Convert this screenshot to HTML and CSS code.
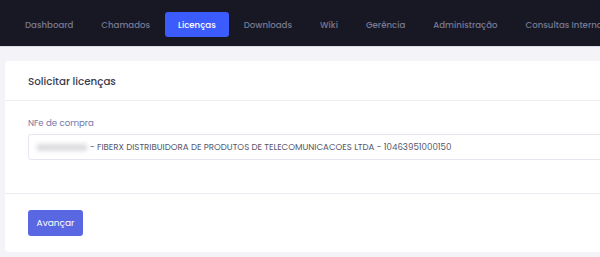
FILE: index.html
```html
<!DOCTYPE html>
<html lang="pt-BR">
<head>
    <meta charset="UTF-8">
    <meta name="viewport" content="width=device-width, initial-scale=1.0">
    <title>Solicitar licenças</title>
    <link rel="stylesheet" href="styles.css">
</head>
<body>

    <nav class="topnav">
        <a class="nav-item">Dashboard</a>
        <a class="nav-item">Chamados</a>
        <a class="nav-item active">Licenças</a>
        <a class="nav-item">Downloads</a>
        <a class="nav-item">Wiki</a>
        <a class="nav-item">Gerência</a>
        <a class="nav-item">Administração</a>
        <a class="nav-item">Consultas Internas</a>
    </nav>

    <main class="page">
        <div class="card">
            <div class="card-header">
                <h2>Solicitar licenças</h2>
            </div>
            <div class="card-body">
                <label class="field-label">NFe de compra</label>
                <div class="select-box">
                    <span class="masked"></span>
                    <span>- FIBERX DISTRIBUIDORA DE PRODUTOS DE TELECOMUNICACOES LTDA - 10463951000150</span>
                </div>
            </div>
            <div class="card-footer">
                <button class="btn-primary">Avançar</button>
            </div>
        </div>
    </main>

</body>
</html>
```

FILE: styles.css
```css
* {
    box-sizing: border-box;
}
body {
    margin: 0;
    font-family: "Poppins", "Inter", "Open Sans", sans-serif;
    background-color: #f4f4f8;
    overflow: hidden;
    width: 600px;
}
.topnav {
    display: flex;
    align-items: flex-start;
    gap: 2px;
    height: 47px;
    padding: 12px 0 0 12px;
    background: #181824;
    border-bottom: 1px solid #dcdce6;
    white-space: nowrap;
}
.nav-item {
    display: block;
    padding: 0 13px;
    height: 25px;
    line-height: 26px;
    font-size: 8.6px;
    font-weight: 500;
    color: #777a93;
    border-radius: 3px;
}
.nav-item.active {
    background: #3b5bfd;
    color: white;
}
.page {
    padding: 14px 0 0 5px;
}
.card {
    background: white;
    border-radius: 4px;
    width: 620px;
}
.card-header {
    height: 40px;
    display: flex;
    align-items: center;
    padding: 2px 23px 0;
    border-bottom: 1px solid #ececf2;
}
.card-header h2 {
    margin: 0;
    font-size: 10.3px;
    font-weight: 500;
    color: #3a3b50;
}
.card-body {
    padding: 16px 23px 33px;
    border-bottom: 1px solid #ececf2;
}
.field-label {
    display: block;
    font-size: 8.6px;
    line-height: 12px;
    color: #7476a6;
    margin-bottom: 5px;
}
.select-box {
    display: flex;
    align-items: center;
    height: 26px;
    padding: 0 8px;
    border: 1px solid #e6e6ee;
    border-radius: 3px;
    font-size: 8.65px;
    color: #55566a;
    white-space: nowrap;
}
.masked {
    background: #dcdce0;
    filter: blur(2px);
    height: 7px;
    width: 50px;
    margin-right: 3px;
}
.card-footer {
    padding: 16px 23px 16px;
}
.btn-primary {
    display: block;
    background: #5a67e3;
    color: white;
    font-family: inherit;
    font-size: 9px;
    height: 26px;
    width: 55px;
    border: none;
    border-radius: 3px;
    padding: 0;
}
```
